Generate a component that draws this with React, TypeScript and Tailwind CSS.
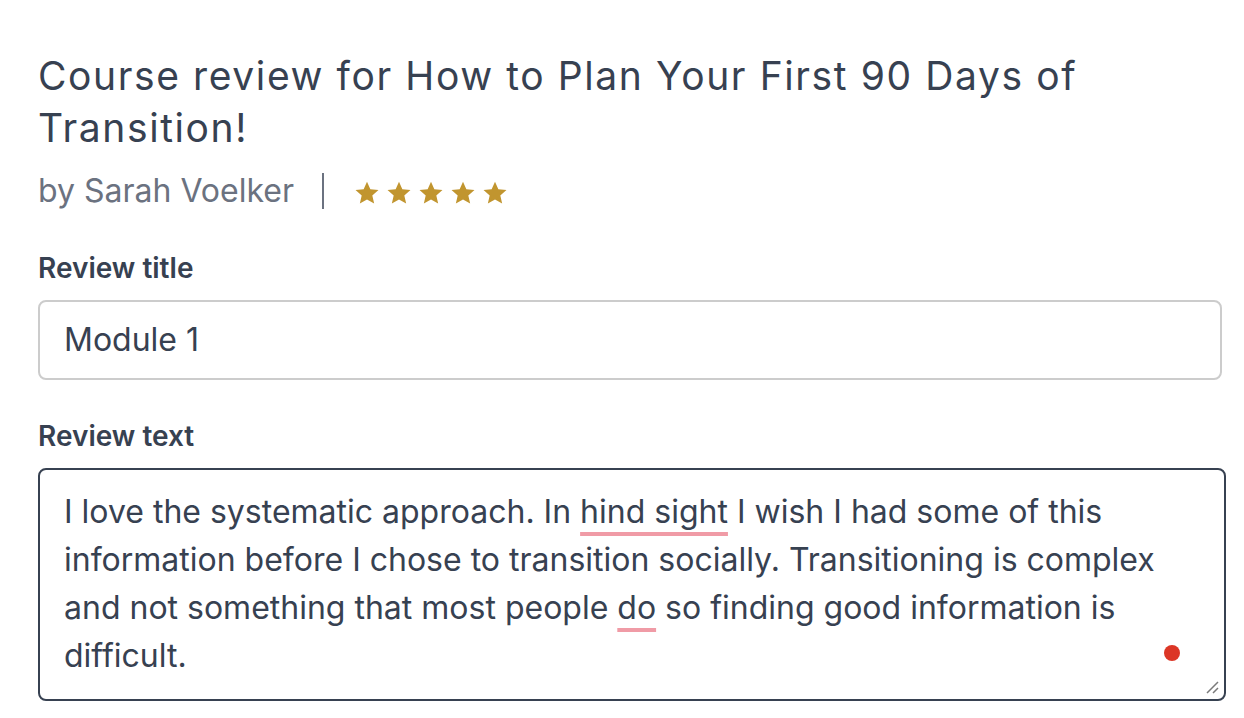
import React from 'react'

const Star = () => (
  <svg className="h-[26px] w-[26px]" viewBox="0 0 24 24" fill="#c1952f">
    <path d="M12 1.5l3.1 7 7.5.7-5.7 5 1.7 7.5L12 17.9l-6.6 3.8 1.7-7.5-5.7-5 7.5-.7z" />
  </svg>
)

const App: React.FC = () => {
  return (
    <div className="min-h-[718px] bg-white pl-[38px] pt-[50px] font-['Inter',sans-serif] text-[#374151]">
      <h1 className="w-[1150px] text-[39px] leading-[52px] font-normal tracking-[1.6px] text-[#374151]">
        Course review for How to Plan Your First 90 Days of Transition!
      </h1>
      <div className="mt-[17px] flex items-center">
        <span className="text-[32px] leading-[40px] text-[#6b7280]">by Sarah Voelker</span>
        <span className="ml-[28px] h-[36px] w-[2px] bg-[#6b7280]" />
        <div className="ml-[30px] flex gap-[6px] pt-[4px]">
          <Star />
          <Star />
          <Star />
          <Star />
          <Star />
        </div>
      </div>

      <label className="mt-[39px] block text-[28px] leading-[36px] font-semibold text-[#374151]">Review title</label>
      <div className="mt-[14px] flex h-[80px] w-[1184px] items-center rounded-[8px] border-2 border-[#cccccc] px-[24px] text-[32px] text-[#374151]">
        Module 1
      </div>

      <label className="mt-[38px] block text-[28px] leading-[36px] font-semibold text-[#374151]">Review text</label>
      <div className="relative mt-[14px] h-[233px] w-[1188px] rounded-[8px] border-2 border-[#374151] px-[24px] pt-[18px] text-[32px] leading-[48px] text-[#374151]">
        I love the systematic approach. In{' '}
        <span className="underline decoration-[#f09ba6] decoration-[4px] underline-offset-[9px]">hind sight</span> I wish I
        had some of this information before I chose to transition socially. Transitioning is complex and not something that
        most people <span className="underline decoration-[#f09ba6] decoration-[4px] underline-offset-[9px]">do</span> so
        finding good information is difficult.
        <span className="absolute right-[44px] bottom-[38px] h-[16px] w-[16px] rounded-full bg-[#dc3626]" />
        <svg className="absolute right-[4px] bottom-[4px] h-[16px] w-[16px]" viewBox="0 0 16 16">
          <path d="M14 3L3 14M14 9L9 14" stroke="#7a7a7a" strokeWidth="1.5" />
        </svg>
      </div>
    </div>
  )
}

export default App
